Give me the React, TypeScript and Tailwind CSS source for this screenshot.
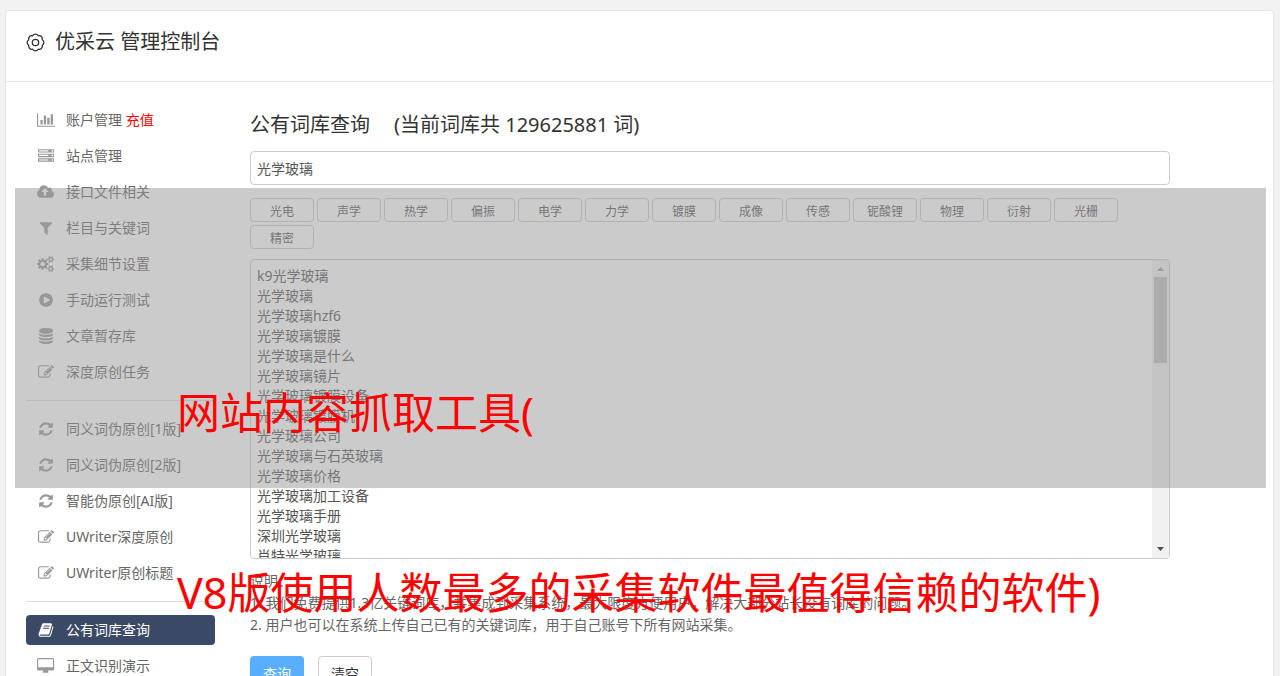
import React, { useState } from "react";

const icons = {
  chart: {
    w: 2048,
    d: "M640 896v512h-256v-512h256zm384-512v1024h-256v-1024h256zm1024 1152v128h-2048v-1536h128v1408h1920zm-640-896v768h-256v-768h256zm384-384v1152h-256v-1152h256z",
  },
  server: {
    w: 1792,
    d: "M128 1408h1024v-128h-1024v128zm0-512h1024v-128h-1024v128zm1568 448q0-40-28-68t-68-28-68 28-28 68 28 68 68 28 68-28 28-68zm-1568-960h1024v-128h-1024v128zm1568 448q0-40-28-68t-68-28-68 28-28 68 28 68 68 28 68-28 28-68zm0-512q0-40-28-68t-68-28-68 28-28 68 28 68 68 28 68-28 28-68zm96 832v384h-1792v-384h1792zm0-512v384h-1792v-384h1792zm0-512v384h-1792v-384h1792z",
  },
  cloud: {
    w: 1920,
    d: "M1280 864q0-14-9-23l-352-352q-9-9-23-9t-23 9l-351 351q-10 12-10 24 0 14 9 23t23 9h224v352q0 13 9.5 22.5t22.5 9.5h192q13 0 22.5-9.5t9.5-22.5v-352h224q13 0 22.5-9.5t9.5-22.5zm640 288q0 159-112.5 271.5t-271.5 112.5h-1088q-185 0-316.5-131.5t-131.5-316.5q0-130 70-240t188-165q-2-30-2-43 0-212 150-362t362-150q156 0 285.5 87t188.5 231q71-62 166-62 106 0 181 75t75 181q0 76-41 138 130 31 213.5 135.5t83.5 238.5z",
  },
  filter: {
    w: 1792,
    d: "M1595 295q17 41-14 70l-493 493v742q0 42-39 59-13 5-25 5-27 0-45-19l-256-256q-19-19-19-45v-486l-493-493q-31-29-14-70 17-39 59-39h1280q42 0 59 39z",
  },
  cogs: {
    w: 1920,
    d: "M896 896q0-106-75-181t-181-75-181 75-75 181 75 181 181 75 181-75 75-181zm768 512q0-52-38-90t-90-38-90 38-38 90q0 53 37.5 90.5t90.5 37.5 90.5-37.5 37.5-90.5zm0-1024q0-52-38-90t-90-38-90 38-38 90q0 53 37.5 90.5t90.5 37.5 90.5-37.5 37.5-90.5zm-384 421v185q0 10-7 19.5t-16 10.5l-155 24q-11 35-32 76 34 48 90 115 7 11 7 20 0 12-7 19-23 30-82.5 89.5t-78.5 59.5q-11 0-21-7l-115-90q-37 19-77 31-11 108-23 155-7 24-30 24h-186q-11 0-20-7.5t-10-17.5l-23-153q-34-10-75-31l-118 89q-7 7-20 7-11 0-21-8-144-133-144-160 0-9 7-19 10-14 41-53t47-61q-23-44-35-82l-152-24q-10-1-17-9.5t-7-19.5v-185q0-10 7-19.5t16-10.5l155-24q11-35 32-76-34-48-90-115-7-11-7-20 0-12 7-20 22-30 82-89t79-59q11 0 21 7l115 90q34-18 77-32 11-108 23-154 7-24 30-24h186q11 0 20 7.5t10 17.5l23 153q34 10 75 31l118-89q8-7 20-7 11 0 21 8 144 133 144 160 0 8-7 19-12 16-42 54t-45 60q23 48 34 82l152 23q10 2 17 10.5t7 19.5zm640 533v140q0 16-149 31-12 27-30 52 51 113 51 138 0 4-4 7-122 71-124 71-8 0-46-47t-52-68q-20 2-30 2t-30-2q-14 21-52 68t-46 47q-2 0-124-71-4-3-4-7 0-25 51-138-18-25-30-52-149-15-149-31v-140q0-16 149-31 13-29 30-52-51-113-51-138 0-4 4-7 4-2 35-20t59-34 30-16q8 0 46 46.5t52 67.5q20-2 30-2t30 2q51-71 92-112l6-2q4 0 124 70 4 3 4 7 0 25-51 138 17 23 30 52 149 15 149 31zm0-1024v140q0 16-149 31-12 27-30 52 51 113 51 138 0 4-4 7-122 71-124 71-8 0-46-47t-52-68q-20 2-30 2t-30-2q-14 21-52 68t-46 47q-2 0-124-71-4-3-4-7 0-25 51-138-18-25-30-52-149-15-149-31v-140q0-16 149-31 13-29 30-52-51-113-51-138 0-4 4-7 4-2 35-20t59-34 30-16q8 0 46 46.5t52 67.5q20-2 30-2t30 2q51-71 92-112l6-2q4 0 124 70 4 3 4 7 0 25-51 138 17 23 30 52 149 15 149 31z",
  },
  play: {
    w: 1792,
    d: "M896 128q209 0 385.5 103t279.5 279.5 103 385.5-103 385.5-279.5 279.5-385.5 103-385.5-103-279.5-279.5-103-385.5 103-385.5 279.5-279.5 385.5-103zm384 823q32-18 32-55t-32-55l-544-320q-31-19-64-1-32 19-32 56v640q0 37 32 56 16 8 32 8 17 0 32-9z",
  },
  database: {
    w: 1792,
    d: "M896 768q237 0 443-43t325-127v170q0 69-103 128t-280 93.5-385 34.5-385-34.5-280-93.5-103-128v-170q119 84 325 127t443 43zm0 768q237 0 443-43t325-127v170q0 69-103 128t-280 93.5-385 34.5-385-34.5-280-93.5-103-128v-170q119 84 325 127t443 43zm0-384q237 0 443-43t325-127v170q0 69-103 128t-280 93.5-385 34.5-385-34.5-280-93.5-103-128v-170q119 84 325 127t443 43zm0-1152q208 0 385 34.5t280 93.5 103 128v128q0 69-103 128t-280 93.5-385 34.5-385-34.5-280-93.5-103-128v-128q0-69 103-128t280-93.5 385-34.5z",
  },
  edit: {
    w: 1792,
    d: "M888 1184l116-116-152-152-116 116v56h96v96h56zm440-720q-16-16-33 1l-350 350q-17 17-1 33t33-1l350-350q17-17 1-33zm80 594v190q0 119-84.5 203.5t-203.5 84.5h-832q-119 0-203.5-84.5t-84.5-203.5v-832q0-119 84.5-203.5t203.5-84.5h832q63 0 117 25 15 7 18 23 3 17-9 29l-49 49q-14 14-32 8-23-6-45-6h-832q-66 0-113 47t-47 113v832q0 66 47 113t113 47h832q66 0 113-47t47-113v-126q0-13 9-22l64-64q15-15 35-7t20 29zm-96-738l288 288-672 672h-288v-288zm444 132l-92 92-288-288 92-92q28-28 68-28t68 28l152 152q28 28 28 68t-28 68z",
  },
  refresh: {
    w: 1792,
    d: "M1639 1056q0 5-1 7-64 268-268 434.5t-478 166.5q-146 0-282.5-55t-243.5-157l-129 129q-19 19-45 19t-45-19-19-45v-448q0-26 19-45t45-19h448q26 0 45 19t19 45-19 45l-137 137q71 66 161 102t187 36q134 0 250-65t186-179q11-17 53-117 8-23 30-23h192q13 0 22.5 9.5t9.5 22.5zm25-800v448q0 26-19 45t-45 19h-448q-26 0-45-19t-19-45 19-45l138-138q-148-137-349-137-134 0-250 65t-186 179q-11 17-53 117-8 23-30 23h-199q-13 0-22.5-9.5t-9.5-22.5v-7q65-268 270-434.5t480-166.5q146 0 284 55.5t245 156.5l130-129q19-19 45-19t45 19 19 45z",
  },
  book: {
    w: 1792,
    d: "M1703 478q40 57 18 129l-275 906q-19 64-76.5 107.5t-122.5 43.5h-923q-77 0-148.5-53.5t-99.5-131.5q-24-67-2-127 0-4 3-27t4-37q1-8-3-21.5t-3-19.5q2-11 8-21t16.5-23.5 16.5-23.5q23-38 45-91.5t30-91.5q3-10 .5-30t-.5-28q3-11 17-28t17-23q21-36 42-92t25-90q1-9-2.5-32t.5-28q4-13 22-30.5t22-22.5q19-26 42.5-84.5t27.5-96.5q1-8-3-25.5t-2-26.5q2-8 9-18t18-23 17-21q8-12 16.5-30.5t15-35 16-36 19.5-32 26.5-23.5 36-11.5 47.5 5.5l-1 3q38-9 51-9h761q74 0 114 56t18 130l-274 906q-36 119-71.5 153.5t-128.5 34.5h-869q-27 0-38 15-11 16-1 43 24 70 144 70h923q29 0 56-15.5t35-41.5l300-987q7-22 5-57 38 15 59 43zm-1064 2q-4 13 2 22.5t20 9.5h608q13 0 25.5-9.5t16.5-22.5l21-64q4-13-2-22.5t-20-9.5h-608q-13 0-25.5 9.5t-16.5 22.5zm-83 256q-4 13 2 22.5t20 9.5h608q13 0 25.5-9.5t16.5-22.5l21-64q4-13-2-22.5t-20-9.5h-608q-13 0-25.5 9.5t-16.5 22.5z",
  },
  desktop: {
    w: 1920,
    d: "M1792 992v-832q0-13-9.5-22.5t-22.5-9.5h-1600q-13 0-22.5 9.5t-9.5 22.5v832q0 13 9.5 22.5t22.5 9.5h1600q13 0 22.5-9.5t9.5-22.5zm128-832v1088q0 66-47 113t-113 47h-544q0 37 16 77.5t32 71 16 43.5q0 26-19 45t-45 19h-512q-26 0-45-19t-19-45q0-14 16-44t32-70 16-78h-544q-66 0-113-47t-47-113v-1088q0-66 47-113t113-47h1600q66 0 113 47t47 113z",
  },
};

type IconName = keyof typeof icons;

const Icon = ({ name }: { name: IconName }) => (
  <svg
    viewBox={`0 0 ${icons[name].w} 1792`}
    className="h-4 w-auto"
    fill="currentColor"
    aria-hidden="true"
  >
    <path d={icons[name].d} />
  </svg>
);

// outlined gear with eight round lobes
const Gear = () => (
  <svg
    width="19"
    height="19"
    viewBox="-9.5 -9.5 19 19"
    fill="none"
    stroke="currentColor"
    strokeWidth="1.3"
    strokeLinejoin="round"
    aria-hidden="true"
  >
    <path d="M6.74-2.79A3.2 3.2 0 0 1 6.74 2.79A3.2 3.2 0 0 1 2.79 6.74A3.2 3.2 0 0 1-2.79 6.74A3.2 3.2 0 0 1-6.74 2.79A3.2 3.2 0 0 1-6.74-2.79A3.2 3.2 0 0 1-2.79-6.74A3.2 3.2 0 0 1 2.79-6.74A3.2 3.2 0 0 1 6.74-2.79z" />
    <circle r="3.2" />
  </svg>
);

type Item = { icon: IconName; text: string; extra?: string; active?: boolean };

const groups: Item[][] = [
  [
    { icon: "chart", text: "账户管理", extra: "充值" },
    { icon: "server", text: "站点管理" },
    { icon: "cloud", text: "接口文件相关" },
    { icon: "filter", text: "栏目与关键词" },
    { icon: "cogs", text: "采集细节设置" },
    { icon: "play", text: "手动运行测试" },
    { icon: "database", text: "文章暂存库" },
    { icon: "edit", text: "深度原创任务" },
  ],
  [
    { icon: "refresh", text: "同义词伪原创[1版]" },
    { icon: "refresh", text: "同义词伪原创[2版]" },
    { icon: "refresh", text: "智能伪原创[AI版]" },
    { icon: "edit", text: "UWriter深度原创" },
    { icon: "edit", text: "UWriter原创标题" },
  ],
  [
    { icon: "book", text: "公有词库查询", active: true },
    { icon: "desktop", text: "正文识别演示" },
  ],
];

const tags = [
  "光电",
  "声学",
  "热学",
  "偏振",
  "电学",
  "力学",
  "镀膜",
  "成像",
  "传感",
  "铌酸锂",
  "物理",
  "衍射",
  "光栅",
  "精密",
];

const words = [
  "k9光学玻璃",
  "光学玻璃",
  "光学玻璃hzf6",
  "光学玻璃镀膜",
  "光学玻璃是什么",
  "光学玻璃镜片",
  "光学玻璃镀膜设备",
  "光学玻璃镀膜机",
  "光学玻璃公司",
  "光学玻璃与石英玻璃",
  "光学玻璃价格",
  "光学玻璃加工设备",
  "光学玻璃手册",
  "深圳光学玻璃",
  "肖特光学玻璃",
].join("\n");

const Sidebar = () => (
  <nav className="w-[189px] shrink-0">
    {groups.map((group, i) => (
      <ul
        key={i}
        className={
          i > 0
            ? "mt-[13px] flex flex-col gap-1.5 border-t border-[#ddd] pt-[13px]"
            : "flex flex-col gap-1.5"
        }
      >
        {group.map(({ icon, text, extra, active }) => (
          <li key={text}>
            <a
              href="#"
              className={
                active
                  ? "flex h-[30px] items-center gap-2.5 rounded bg-[#3a4a66] pl-2.5 text-white"
                  : "flex h-[30px] items-center gap-2.5 rounded pl-2.5 text-[#666]"
              }
            >
              <span
                className={
                  active
                    ? "flex w-5 justify-center"
                    : "flex w-5 justify-center text-[#999]"
                }
              >
                <Icon name={icon} />
              </span>
              <span className="whitespace-nowrap">
                {text}
                {extra && <span className="text-[#f00]"> {extra}</span>}
              </span>
            </a>
          </li>
        ))}
      </ul>
    ))}
  </nav>
);

const Scrollbar = () => (
  <div
    className="absolute inset-y-px right-px flex w-[17px] flex-col items-center rounded-r-[3px] bg-[#f1f1f1]"
    aria-hidden="true"
  >
    <svg width="7" height="17" viewBox="0 0 7 17" fill="#a3a3a3">
      <path d="M0 11L3.5 7L7 11z" />
    </svg>
    <div className="h-[86px] w-[13px] bg-[#c1c1c1]" />
    <svg className="mt-auto" width="7" height="17" viewBox="0 0 7 17" fill="#505050">
      <path d="M0 6L3.5 10L7 6z" />
    </svg>
  </div>
);

const App = () => {
  const [keyword, setKeyword] = useState("光学玻璃");
  const [result, setResult] = useState(words);

  return (
    <div className="relative h-screen overflow-hidden bg-[#f2f2f2] pt-2.5 pr-1.5 pl-[5px] font-['Noto_Sans','Noto_Sans_CJK_SC',sans-serif] text-sm text-[#666]">
      <div className="min-h-full rounded border border-[#e6e6e6] bg-white">
        <header className="flex h-[71px] items-center gap-2.5 border-b border-[#e6e6e6] px-5 pb-2 text-[#333]">
          <Gear />
          <h1 className="text-xl">优采云 管理控制台</h1>
        </header>

        <div className="flex gap-[35px] pt-[23px] pr-[103px] pl-5">
          <Sidebar />

          <main className="min-w-0 flex-1">
            <h2 className="flex h-10 items-center gap-6 text-xl text-[#333]">
              <span>公有词库查询</span>
              <span>(当前词库共 129625881 词)</span>
            </h2>

            <label htmlFor="keyword" className="sr-only">
              关键词
            </label>
            <input
              id="keyword"
              value={keyword}
              onChange={(e) => setKeyword(e.target.value)}
              className="mt-1.5 block h-[34px] w-full rounded border border-[#ccc] bg-white px-1.5 text-[#555] outline-none"
            />

            <div className="mt-[13px] flex flex-wrap gap-[3px]">
              {tags.map((tag) => (
                <button
                  key={tag}
                  onClick={() => setKeyword(tag)}
                  className="h-6 w-16 rounded border border-[#ccc] bg-white pt-1 text-xs text-[#555]"
                >
                  {tag}
                </button>
              ))}
            </div>

            <div className="relative mt-2.5">
              <label htmlFor="result" className="sr-only">
                查询结果
              </label>
              <textarea
                id="result"
                value={result}
                onChange={(e) => setResult(e.target.value)}
                className="block h-[300px] w-full resize-none overflow-hidden rounded border border-[#ccc] bg-white px-1.5 py-1.5 leading-5 text-[#555] outline-none"
              />
              <Scrollbar />
            </div>

            <div className="mt-[11px] leading-[22px]">
              <p>说明：</p>
              <p>
                1. 我们免费提供1.3亿关键词库，并集成到采集系统，最大限度方便用户，解决大部分站长没有词库的问题。
              </p>
              <p>2. 用户也可以在系统上传自己已有的关键词库，用于自己账号下所有网站采集。</p>
            </div>

            <div className="mt-5 flex gap-3.5">
              <button className="h-9 w-[54px] rounded bg-[#5aaeff] text-white">
                查询
              </button>
              <button
                onClick={() => setResult("")}
                className="h-9 w-[54px] rounded border border-[#ccc] bg-white text-[#333]"
              >
                清空
              </button>
            </div>
          </main>
        </div>
      </div>

      {/* banner over the console */}
      <div className="pointer-events-none absolute top-[188px] right-3.5 left-[15px] h-[300px] bg-[#979797]/50 pt-[135px] pl-[162px]">
        <p className="text-[43px] leading-[180px] whitespace-nowrap text-[#f00]">
          网站内容抓取工具(
          <br />
          V8版使用人数最多的采集软件最值得信赖的软件)
        </p>
      </div>
    </div>
  );
};

export default App;
